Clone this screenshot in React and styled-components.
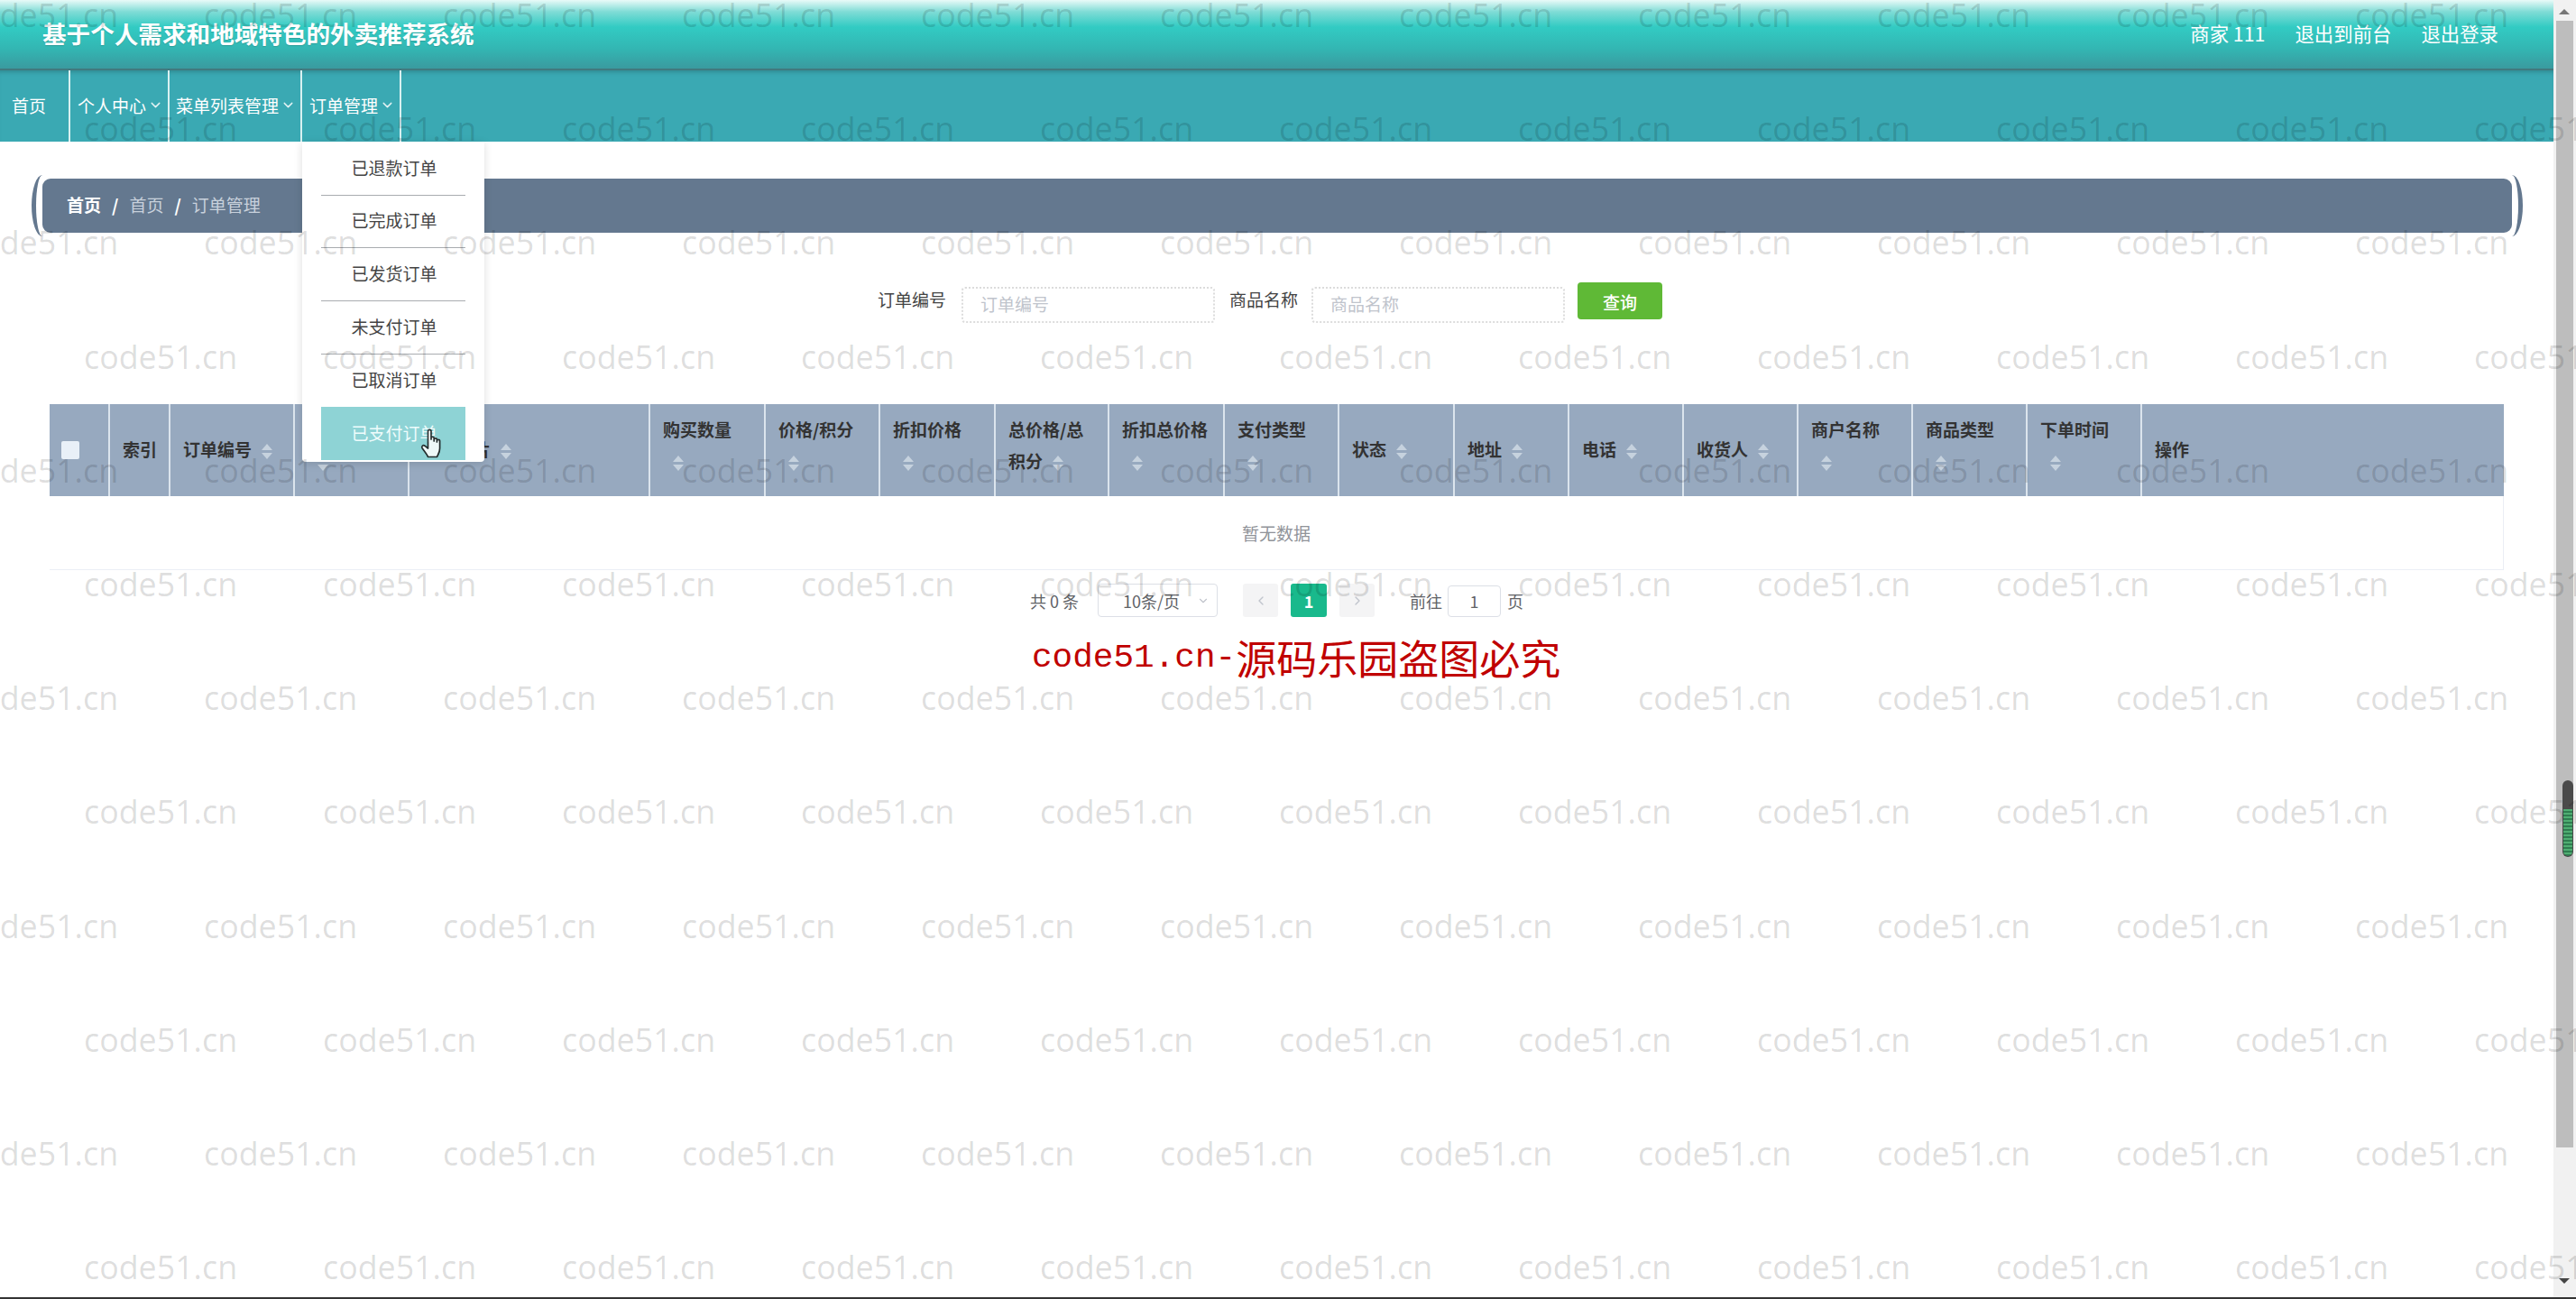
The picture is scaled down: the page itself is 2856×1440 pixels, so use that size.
import styled, { createGlobalStyle } from 'styled-components';
import { ChevronDown, ChevronLeft, ChevronRight } from 'lucide-react';

const CJK = `"Noto Sans CJK SC", "Noto Sans", sans-serif`;

const GlobalStyle = createGlobalStyle`
  html, body {
    margin: 0;
    padding: 0;
    background: #fff;
    overflow: hidden;
  }
  * {
    box-sizing: border-box;
  }
`;

const Shell = styled.div`
  position: relative;
  display: grid;
  grid-template-columns: 2831px 25px;
  width: 2856px;
  height: 1440px;
  overflow: hidden;
  border-bottom: 2px solid #333;
  font-family: ${CJK};
  font-size: 19px;
  color: #333;
`;

const Main = styled.main`
  display: flex;
  flex-direction: column;
  min-width: 0;
`;

const TopBar = styled.header`
  display: flex;
  align-items: center;
  justify-content: space-between;
  height: 78px;
  padding: 0 61px 0 47px;
  color: #fff;
  border-bottom: 2px solid #41797e;
  background: linear-gradient(
    180deg,
    #e8faf8 0,
    #7fdcd6 13px,
    #32cbc3 30px,
    #33b5b2 55px,
    #3a9a9f 76px
  );
`;

const Title = styled.div`
  font-size: 26.6px;
  font-weight: 700;
  line-height: 1;
  margin-top: -1px;
  text-shadow: 0 1px 1px rgba(0, 0, 0, 0.15);
`;

const UserLinks = styled.div`
  display: flex;
  gap: 33px;
  margin-top: -4px;
  font-size: 21.4px;
`;

const NavBar = styled.nav`
  display: flex;
  height: 79px;
  background: #3aa9b3;
  box-shadow: inset 0 5px 4px -3px rgba(30, 80, 85, 0.35);
  color: #fff;
`;

const NavItem = styled.div`
  position: relative;
  display: flex;
  align-items: center;
  width: ${(p) => p.$width}px;
  padding-left: ${(p) => p.$inset}px;
  padding-bottom: 2px;
  border-right: 2px solid #d9f1f1;
  svg {
    flex: none;
    margin-left: 2px;
    opacity: 0.85;
  }
`;

const Dropdown = styled.ul`
  position: absolute;
  top: 100%;
  left: 0;
  z-index: 10;
  width: 202px;
  margin: 0;
  padding: 1px 21px 2px;
  list-style: none;
  background: #fff;
  color: #444;
  box-shadow: 0 2px 10px rgba(0, 0, 0, 0.14);
  border-radius: 0 0 4px 4px;
`;

const DropdownItem = styled.li`
  position: relative;
  display: flex;
  align-items: center;
  justify-content: center;
  height: 58.67px;
  padding: 0 0 3px 2px;
  background: ${(p) => (p.$active ? '#8ed3d5' : 'transparent')};
  color: ${(p) => (p.$active ? '#eefcfc' : '#444')};
  border-bottom: ${(p) => (p.$divided ? '1px solid #a9acb0' : 'none')};
`;

const HandCursor = styled.svg`
  position: absolute;
  left: 108px;
  top: 24px;
`;

const Crumbs = styled.div`
  position: relative;
  display: flex;
  align-items: center;
  gap: 12px;
  width: 2738px;
  height: 60px;
  margin: 41px 0 0 47px;
  padding: 0 0 3px 27px;
  border-radius: 9px;
  background: #64788f;
  color: #fff;
  &::before,
  &::after {
    content: '';
    position: absolute;
    top: -4px;
    bottom: -4px;
    width: 12px;
    border: 0 solid #64788f;
  }
  &::before {
    left: -12px;
    border-left-width: 5px;
    border-radius: 12px 0 0 12px / 34px 0 0 34px;
  }
  &::after {
    right: -12px;
    border-right-width: 5px;
    border-radius: 0 12px 12px 0 / 0 34px 34px 0;
  }
`;

const CrumbLink = styled.span`
  font-weight: ${(p) => (p.$strong ? 700 : 400)};
  color: ${(p) => (p.$strong ? '#fff' : '#c8d1dc')};
`;

const CrumbSeparator = styled.span`
  font-weight: 700;
`;

const SearchForm = styled.form`
  display: flex;
  align-items: flex-start;
  margin-top: 55px;
  padding-left: 973px;
`;

const FieldLabel = styled.label`
  width: ${(p) => p.$width}px;
  line-height: 38px;
  color: #444;
`;

const DottedInput = styled.div`
  width: 281px;
  height: 40px;
  margin-top: 5px;
  margin-right: 16px;
  padding-left: 19px;
  line-height: 33px;
  border: 2px dotted #dcdcdc;
  border-radius: 4px;
  color: #c0c4cc;
`;

const SearchButton = styled.button`
  width: 94px;
  height: 41px;
  margin-left: -2px;
  padding: 2px 0 0;
  border: 0;
  border-radius: 4px;
  background: #5fb936;
  color: #fff;
  font: 500 19px ${CJK};
`;

const Table = styled.section`
  width: 2721px;
  margin: 90px 0 0 55px;
`;

const HeaderRow = styled.div`
  display: grid;
  grid-template-columns: 67px 67px 138px 127px 267px 128px 127px 128px 126px 128px 127px 128px 127px 127px 127px 127px 127px 127px 401px;
  height: 102px;
  background: #97a9bf;
`;

const HeaderCell = styled.div`
  display: flex;
  align-items: center;
  padding: 0 14px 3px;
  border-right: ${(p) => (p.$last ? 'none' : '2px solid #dbe4ed')};
  font-weight: 700;
  line-height: 35px;
  color: #333;
  &:first-child {
    padding: 0 0 0 13px;
  }
`;

const HeaderLabel = styled.div`
  margin-top: ${(p) => (p.$wrapped ? -9 : 0)}px;
  white-space: ${(p) => (p.$sortable ? 'normal' : 'nowrap')};
`;

const CheckBox = styled.span`
  display: block;
  width: 20px;
  height: 20px;
  border-radius: 2px;
  background: #e9f0f8;
`;

const SortCaret = styled.span`
  display: inline-flex;
  flex-direction: column;
  align-items: center;
  justify-content: center;
  gap: 3px;
  width: 24px;
  height: 20px;
  margin-left: 5px;
  vertical-align: middle;
  &::before,
  &::after {
    content: '';
    width: 0;
    height: 0;
    border-left: 6px solid transparent;
    border-right: 6px solid transparent;
  }
  &::before {
    border-bottom: 7px solid #c6d2de;
  }
  &::after {
    border-top: 7px solid #c6d2de;
  }
`;

const EmptyRow = styled.div`
  display: flex;
  align-items: center;
  justify-content: center;
  height: 82px;
  border-right: 1px solid #ebeef5;
  border-bottom: 1px solid #ebeef5;
  color: #909399;
`;

const Pager = styled.div`
  display: flex;
  align-items: center;
  height: 37px;
  margin-top: 15px;
  padding-left: 1142px;
  font-size: 18px;
  color: #606266;
`;

const PagerSelect = styled.div`
  display: flex;
  align-items: center;
  justify-content: space-between;
  width: 133px;
  height: 37px;
  margin: 0 28px 0 21px;
  padding: 0 8px 0 27px;
  border: 1px solid #dcdfe6;
  border-radius: 4px;
  color: #606266;
`;

const PageButton = styled.div`
  display: flex;
  align-items: center;
  justify-content: center;
  width: ${(p) => (p.$active ? 40 : 39)}px;
  height: 37px;
  margin-right: 14px;
  border-radius: 3px;
  background: ${(p) => (p.$active ? '#19b98c' : '#f4f4f5')};
  color: ${(p) => (p.$active ? '#fff' : '#c0c4cc')};
  font-weight: 700;
`;

const JumpLabel = styled.span`
  margin-left: ${(p) => p.$offset}px;
`;

const JumpInput = styled.div`
  width: 59px;
  height: 35px;
  margin: 1px 7px 0 6px;
  line-height: 33px;
  text-align: center;
  border: 1px solid #dcdfe6;
  border-radius: 4px;
`;

const CopyNotice = styled.div`
  display: flex;
  align-items: center;
  height: 46px;
  margin-top: 22px;
  padding-left: 1144px;
  color: #c00000;
  font-size: 45px;
  line-height: 46px;
`;

const NoticeLatin = styled.span`
  font-family: "Liberation Mono", monospace;
  font-size: 37.7px;
`;

const Scrollbar = styled.aside`
  position: relative;
  display: flex;
  flex-direction: column;
  background: #f1f1f1;
`;

const ScrollArrow = styled.div`
  width: 0;
  height: 0;
  margin: ${(p) => p.$margin};
  border-left: 6px solid transparent;
  border-right: 6px solid transparent;
  ${(p) =>
    p.$down ? 'border-top: 6px solid #444;' : 'border-bottom: 6px solid #777;'}
`;

const ScrollTrack = styled.div`
  display: flex;
  flex-direction: column;
  align-items: flex-end;
  width: 19px;
  height: 1249px;
  margin: 7px 0 0 3px;
  padding-top: 842px;
  background: #bdbdbd;
`;

const ScrollThumb = styled.div`
  display: flex;
  flex-direction: column;
  justify-content: flex-end;
  width: 12px;
  height: 85px;
  padding: 0 1px 1px;
  border-radius: 6px;
  background: #4a4a4a;
`;

const ThumbMeter = styled.div`
  height: 52px;
  border-radius: 0 0 5px 5px;
  background: repeating-linear-gradient(180deg, #4fae72 0, #4fae72 2px, #2f7d50 2px, #2f7d50 4px);
`;

const WatermarkLayer = styled.div`
  position: absolute;
  inset: 0;
  z-index: 50;
  display: flex;
  flex-direction: column;
  overflow: hidden;
  pointer-events: none;
  padding-top: 0;
  margin-top: -47px;
`;

const WatermarkRow = styled.div`
  display: flex;
  flex: none;
  height: 126.2px;
  align-items: center;
  margin-left: ${(p) => p.$shift}px;
`;

const WatermarkText = styled.span`
  flex: none;
  width: 265px;
  font-family: "Open Sans", sans-serif;
  font-size: 35.8px;
  color: rgba(0, 0, 0, 0.15);
`;

const ORDER_MENU = ['已退款订单', '已完成订单', '已发货订单', '未支付订单', '已取消订单', '已支付订单'];

// label, whether the column sorts, whether its head runs to two lines
const COLUMNS = [
  ['索引', false, false],
  ['订单编号', true, false],
  ['商品名称', true, true],
  ['商品图片', true, false],
  ['购买数量', true, true],
  ['价格/积分', true, true],
  ['折扣价格', true, true],
  ['总价格/总积分', true, true],
  ['折扣总价格', true, true],
  ['支付类型', true, true],
  ['状态', true, false],
  ['地址', true, false],
  ['电话', true, false],
  ['收货人', true, false],
  ['商户名称', true, true],
  ['商品类型', true, true],
  ['下单时间', true, true],
  ['操作', false, false],
];

const Hand = () => (
  <HandCursor width="25" height="33" viewBox="0 0 25 33">
    <path
      d="M8.5 3C8.5.8 12 .8 12 3v9-1.500c0-1.700 3.200-1.700 3.200 0V14v-2c0-1.600 3.200-1.600 3.200 0v3-1.500c0-1.500 3.200-1.500 3.200 0V22c0 5-2.100 7-3.100 9.500h-10C7.500 29 5 26 2.200 22c-1.400-2.200.8-4.200 2.800-2.800l3.500 2.800Z"
      fill="#fff"
      stroke="#111"
      strokeWidth="1.7"
      strokeLinejoin="round"
    />
  </HandCursor>
);

const App = () => {
  return (
    <Shell>
      <GlobalStyle />
      <Main>
        <TopBar>
          <Title>基于个人需求和地域特色的外卖推荐系统</Title>
          <UserLinks>
            <span>商家 111</span>
            <span>退出到前台</span>
            <span>退出登录</span>
          </UserLinks>
        </TopBar>
        <NavBar>
          <NavItem $width={78} $inset={13}>首页</NavItem>
          <NavItem $width={110} $inset={8}>个人中心<ChevronDown size={17} /></NavItem>
          <NavItem $width={147} $inset={7}>菜单列表管理<ChevronDown size={17} /></NavItem>
          <NavItem $width={110} $inset={8}>
            订单管理<ChevronDown size={17} />
            <Dropdown>
              {ORDER_MENU.map((label, i) => (
                <DropdownItem key={label} $divided={i < 4} $active={i === 5}>
                  {label}
                  {i === 5 && <Hand />}
                </DropdownItem>
              ))}
            </Dropdown>
          </NavItem>
        </NavBar>
        <Crumbs>
          <CrumbLink $strong>首页</CrumbLink>
          <CrumbSeparator>/</CrumbSeparator>
          <CrumbLink>首页</CrumbLink>
          <CrumbSeparator>/</CrumbSeparator>
          <CrumbLink>订单管理</CrumbLink>
        </Crumbs>
        <SearchForm>
          <FieldLabel $width={93}>订单编号</FieldLabel>
          <DottedInput>订单编号</DottedInput>
          <FieldLabel $width={91}>商品名称</FieldLabel>
          <DottedInput>商品名称</DottedInput>
          <SearchButton type="button">查询</SearchButton>
        </SearchForm>
        <Table>
          <HeaderRow>
            <HeaderCell><CheckBox /></HeaderCell>
            {COLUMNS.map(([label, sortable, wrapped], i) => (
              <HeaderCell key={label} $last={i === COLUMNS.length - 1}>
                <HeaderLabel $sortable={sortable} $wrapped={wrapped}>
                  {label}
                  {sortable && <SortCaret />}
                </HeaderLabel>
              </HeaderCell>
            ))}
          </HeaderRow>
          <EmptyRow>暂无数据</EmptyRow>
        </Table>
        <Pager>
          <span>共 0 条</span>
          <PagerSelect>10条/页<ChevronDown size={14} color="#c0c4cc" /></PagerSelect>
          <PageButton><ChevronLeft size={16} /></PageButton>
          <PageButton $active>1</PageButton>
          <PageButton><ChevronRight size={16} /></PageButton>
          <JumpLabel $offset={25}>前往</JumpLabel>
          <JumpInput>1</JumpInput>
          <span>页</span>
        </Pager>
        <CopyNotice>
          <NoticeLatin>code51.cn-</NoticeLatin>源码乐园盗图必究
        </CopyNotice>
      </Main>
      <Scrollbar>
        <ScrollArrow $margin="10px 0 0 6px" />
        <ScrollTrack>
          <ScrollThumb><ThumbMeter /></ScrollThumb>
        </ScrollTrack>
        <ScrollArrow $down $margin="145px 0 0 6px" />
      </Scrollbar>
      <WatermarkLayer>
        {Array.from({ length: 12 }, (_, row) => (
          <WatermarkRow key={row} $shift={row % 2 ? 93 : -39}>
            {Array.from({ length: 12 }, (_, col) => (
              <WatermarkText key={col}>code51.cn</WatermarkText>
            ))}
          </WatermarkRow>
        ))}
      </WatermarkLayer>
    </Shell>
  );
};

export default App;
